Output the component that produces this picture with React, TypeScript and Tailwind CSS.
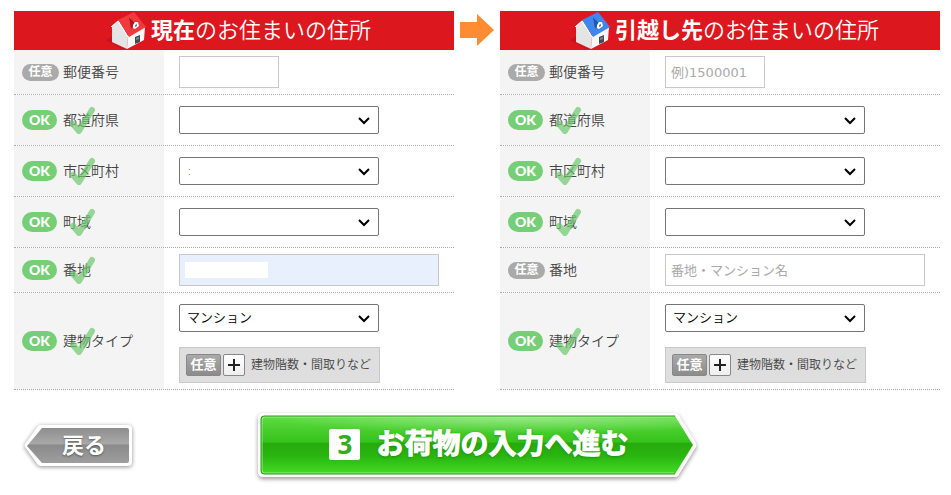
import { useState } from "react";
import clsx from "clsx";

type Status = "ok" | "optional";

const House = ({ roof, dark }: { roof: string; dark: string }) => (
  <svg
    className="mr-0.5 shrink-0"
    width="44"
    height="44"
    viewBox="0 0 44 44"
    aria-hidden="true"
  >
    <path d="M1 31 7 27 7 34 20 40 17 40Z" fill="#a30f16" opacity="0.4" />
    <path d="M7 17 14 11 23 27 22 40 7 33Z" fill="#e4e4e4" />
    <path d="M23 26 40 18 39 31 22 40Z" fill="#f8f8f8" />
    <path d="M13 11 29 3 41 18 24 28Z" fill={roof} />
    <path
      d="M6 18 13 12 23 28"
      stroke="#fff"
      fill="none"
      strokeLinejoin="round"
    />
    <path d="M24 8 30 14 26 20Z" fill={dark} />
    <path d="M24 8 29 6 35 12 30 14Z" fill={roof} />
    <path d="M28 19 28 16 30 13 33 13 34 17 30 20Z" fill="#fff" />
    <path d="M30 16 32 15 32 17 30 18Z" fill="#777" />
    <path d="M30 28 35 26 35 33 30 35Z" fill="#454b55" />
    <path d="M31 29 34 28 34 30 31 31Z" fill="#7d8794" />
  </svg>
);

const Badge = ({ status }: { status: Status }) =>
  status === "ok" ? (
    <span className="flex h-5 w-[35px] items-center justify-center rounded-full bg-[#76cf76] font-[family-name:Lato] text-sm font-black text-white">
      OK
    </span>
  ) : (
    <span className="flex h-[17px] w-[37px] items-center justify-center rounded-full bg-[#aaa] text-xs font-bold text-white">
      任意
    </span>
  );

type RowProps = {
  id: string;
  label: string;
  status: Status;
  tall?: boolean;
  children: React.ReactNode;
};

const Row = ({ id, label, status, tall, children }: RowProps) => (
  <div className="flex border-b border-dotted border-[#aaa]">
    <div className="relative flex w-[150px] shrink-0 items-center bg-[#f4f4f4] pl-2">
      <div className="w-[41px]">
        <Badge status={status} />
      </div>
      <label htmlFor={id} className="text-sm font-[350] text-[#444]">
        {label}
      </label>
      {status === "ok" && (
        <svg
          className="pointer-events-none absolute left-14 h-7 w-7"
          viewBox="0 0 28 28"
          fill="none"
          aria-hidden="true"
        >
          <path
            d="M3 18 9 25 22 4"
            stroke="#6cc86c"
            strokeWidth="6"
            strokeLinecap="round"
            strokeLinejoin="round"
            opacity="0.7"
          />
        </svg>
      )}
    </div>
    <div
      className={clsx(
        "min-w-0 flex-1 pl-[15px]",
        tall ? "pb-1.5" : "flex items-center",
      )}
    >
      {children}
    </div>
  </div>
);

type SelectProps = {
  id: string;
  options: string[];
};

const Select = ({ id, options }: SelectProps) => (
  <div className="relative my-[11px] h-7 w-[200px]">
    <select
      id={id}
      className="h-7 w-full appearance-none rounded-xs border border-[#767676] bg-white px-[7px] text-[13px] font-[350] text-black"
    >
      {options.map((option) => (
        <option key={option}>{option}</option>
      ))}
    </select>
    <svg
      className="pointer-events-none absolute top-2.5 right-2 h-2.5 w-3.5"
      viewBox="0 0 14 10"
      fill="none"
      aria-hidden="true"
    >
      <path d="M2 2 7 7 12 2" stroke="#000" strokeWidth="2" />
    </svg>
  </div>
);

const inputClass =
  "h-8 border border-[#c8c8c8] px-[5px] text-[13px] text-black placeholder:text-[#aaa]";

type AddressFormProps = {
  prefix: string;
  strong: string;
  roof: string;
  dark: string;
  city: string;
  zipPlaceholder?: string;
  streetPlaceholder?: string;
  filled?: boolean;
};

const AddressForm = ({
  prefix,
  strong,
  roof,
  dark,
  city,
  zipPlaceholder,
  streetPlaceholder,
  filled,
}: AddressFormProps) => {
  const [zip, setZip] = useState("");
  const [street, setStreet] = useState("");

  return (
    <section className="min-w-0 flex-1">
      <h2 className="flex h-[39px] items-center justify-center bg-[#dc171e] pl-2 text-[22px] whitespace-nowrap text-white">
        <House roof={roof} dark={dark} />
        <span className="font-[350]">
          <strong className="font-bold">{strong}</strong>のお住まいの住所
        </span>
      </h2>

      <Row id={`${prefix}-zip`} label="郵便番号" status="optional">
        <input
          id={`${prefix}-zip`}
          type="text"
          value={zip}
          onChange={(e) => setZip(e.target.value)}
          placeholder={zipPlaceholder}
          className={clsx(inputClass, "my-1.5 w-[100px]")}
        />
      </Row>
      <Row id={`${prefix}-pref`} label="都道府県" status="ok">
        <Select id={`${prefix}-pref`} options={[""]} />
      </Row>
      <Row id={`${prefix}-city`} label="市区町村" status="ok">
        <Select id={`${prefix}-city`} options={[city]} />
      </Row>
      <Row id={`${prefix}-town`} label="町域" status="ok">
        <Select id={`${prefix}-town`} options={[""]} />
      </Row>
      <Row
        id={`${prefix}-street`}
        label="番地"
        status={filled ? "ok" : "optional"}
      >
        <div className="relative my-1.5 w-[260px]">
          <input
            id={`${prefix}-street`}
            type="text"
            value={street}
            onChange={(e) => setStreet(e.target.value)}
            placeholder={streetPlaceholder}
            className={clsx(
              inputClass,
              "block w-full",
              filled ? "bg-[#e8f0fe]" : "bg-white",
            )}
          />
          {filled && (
            <span className="pointer-events-none absolute top-2 left-1.5 h-4 w-[83px] bg-white" />
          )}
        </div>
      </Row>
      <Row id={`${prefix}-type`} label="建物タイプ" status="ok" tall>
        <Select id={`${prefix}-type`} options={["マンション"]} />
        <button
          type="button"
          className="mt-[15px] flex h-9 w-[201px] items-center border border-[#c8c8c8] bg-[#dedede] pl-1.5 text-xs font-[350] whitespace-nowrap text-[#444]"
        >
          <span className="flex h-[22px] w-[35px] items-center justify-center rounded-xs border border-[#888] bg-linear-to-b from-[#aaa] to-[#8c8c8c] text-[13px] font-bold text-white">
            任意
          </span>
          <span className="mr-1.5 ml-0.5 flex h-[22px] w-[22px] items-center justify-center rounded-xs border border-[#888] bg-linear-to-b from-white to-[#eee]">
            <svg width="14" height="14" viewBox="0 0 14 14" aria-hidden="true">
              <path d="M7 1V13M1 7H13" stroke="#222" strokeWidth="2" />
            </svg>
          </span>
          建物階数・間取りなど
        </button>
      </Row>
    </section>
  );
};

const BackButton = () => (
  <button
    type="button"
    className="relative ml-2.5 flex h-[43px] w-[108px] items-center justify-center pl-3 text-[22px] font-bold text-white"
  >
    <svg
      className="absolute inset-0 overflow-visible drop-shadow-[0_1px_2px_rgba(0,0,0,0.45)]"
      width="108"
      height="43"
      viewBox="0 0 108 43"
      aria-hidden="true"
    >
      <defs>
        <linearGradient id="back-fill" x1="0" y1="0" x2="0" y2="1">
          <stop offset="0" stopColor="#8e8e8e" />
          <stop offset="0.46" stopColor="#a9a9a9" />
          <stop offset="0.48" stopColor="#8a8a8a" />
          <stop offset="1" stopColor="#9e9e9e" />
        </linearGradient>
      </defs>
      <path
        d="M17 1H104Q108 1 108 5V38Q108 42 104 42H17Q15 42 14 41L1 23Q0 22 1 20L14 2Q15 1 17 1Z"
        fill="#fff"
      />
      <path
        d="M18 4H103Q105 4 105 6V37Q105 39 103 39H18L3 22Z"
        fill="url(#back-fill)"
      />
    </svg>
    <span className="relative [text-shadow:0_1px_2px_rgba(0,0,0,0.4)]">
      戻る
    </span>
  </button>
);

const NextButton = () => (
  <button
    type="submit"
    className="relative flex h-[67px] w-[440px] items-center justify-center pb-0.5 pl-1 text-[28px] font-bold whitespace-nowrap text-white"
  >
    <svg
      className="absolute inset-0 overflow-visible drop-shadow-[0_2px_2px_rgba(0,0,0,0.4)]"
      width="440"
      height="67"
      viewBox="0 0 440 67"
      aria-hidden="true"
    >
      <defs>
        <linearGradient id="next-fill" x1="0" y1="0" x2="0" y2="1">
          <stop offset="0" stopColor="#5cdd40" />
          <stop offset="0.45" stopColor="#37c21c" />
          <stop offset="0.47" stopColor="#25ab0b" />
          <stop offset="0.7" stopColor="#2bb611" />
          <stop offset="1" stopColor="#42dc25" />
        </linearGradient>
        <radialGradient id="next-shine" cx="0.6" cy="0" r="0.6">
          <stop offset="0" stopColor="#fff" stopOpacity="0.4" />
          <stop offset="1" stopColor="#fff" stopOpacity="0" />
        </radialGradient>
      </defs>
      <path
        d="M6 1H418Q420 1 421 2L439 31Q440 33 439 35L421 64Q420 65 418 65H6Q1 65 1 60V6Q1 1 6 1Z"
        fill="#fff"
      />
      <path
        d="M7 4H418L436 33 418 62H7Q4 62 4 59V7Q4 4 7 4Z"
        fill="url(#next-fill)"
      />
      <path d="M7 4H418L436 33H4V7Q4 4 7 4Z" fill="url(#next-shine)" />
      <path d="M417 61H8Q5 61 5 58V8Q5 5 8 5H417" stroke="#9bee87" fill="none" />
      <path d="M418 4H7Q4 4 4 7V59Q4 62 7 62H418" stroke="#2a9d1b" fill="none" />
    </svg>
    <span className="relative mr-4 flex h-[31px] w-[31px] items-center justify-center rounded-xs bg-white font-[family-name:Noto_Sans] text-[26px] text-[#36aa20]">
      3
    </span>
    <span className="relative [-webkit-text-stroke:1px_white] [text-shadow:0_1px_3px_rgba(0,80,0,0.5)]">
      お荷物の入力へ進む
    </span>
  </button>
);

const App = () => {
  return (
    <form
      onSubmit={(e) => e.preventDefault()}
      className="bg-white pt-[11px] pr-[11px] pb-4 pl-3.5 font-['DejaVu_Sans','Noto_Sans_CJK_JP',sans-serif]"
    >
      <div className="flex">
        <AddressForm
          prefix="from"
          strong="現在"
          roof="#f03a3e"
          dark="#a8191f"
          city=":"
          filled
        />
        <div className="flex w-[46px] shrink-0 justify-center pt-[3px]">
          <svg width="34" height="32" viewBox="0 0 34 32" aria-hidden="true">
            <path d="M0 8H17V0L34 16 17 32V24H0Z" fill="#ff8c33" />
          </svg>
        </div>
        <AddressForm
          prefix="to"
          strong="引越し先"
          roof="#3f86ee"
          dark="#2456ae"
          city=""
          zipPlaceholder="例)1500001"
          streetPlaceholder="番地・マンション名"
        />
      </div>

      <div className="mt-[22px] grid grid-cols-[1fr_auto_1fr] items-center">
        <BackButton />
        <NextButton />
      </div>
    </form>
  );
};

export default App;
